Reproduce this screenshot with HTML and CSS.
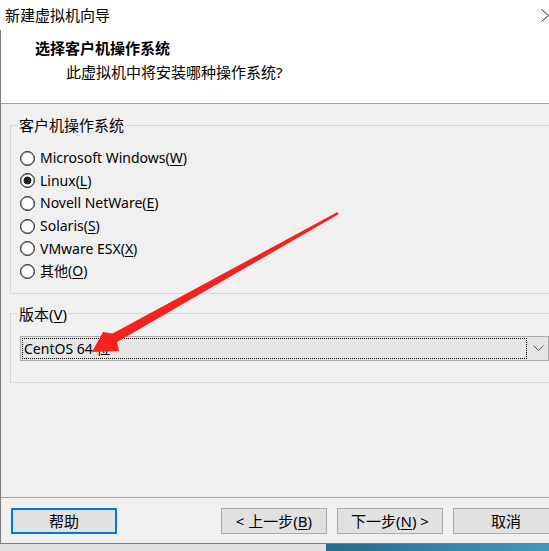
FILE: index.html
```html
<!DOCTYPE html>
<html lang="zh-CN">
<head>
<meta charset="utf-8">
<title>新建虚拟机向导</title>
<link rel="stylesheet" href="styles.css">
</head>
<body>
<div class="screen">
  <div class="window">
    <div class="titlebar">
      <span class="title">新建虚拟机向导</span>
      <svg class="close" width="8" height="14" viewBox="0 0 8 14"><path d="M0.5 0.5 L7.5 6.5 M0.5 12.5 L7.5 6.5" stroke="#222" stroke-width="1" fill="none"/></svg>
    </div>
    <div class="frame">
      <div class="header">
        <div class="h-title">选择客户机操作系统</div>
        <div class="h-sub">此虚拟机中将安装哪种操作系统?</div>
      </div>
      <div class="content">
        <fieldset class="group g-os">
          <legend>客户机操作系统</legend>
          <div class="radio-list">
            <div class="radio"><span class="dot"></span><span class="lbl">Microsoft Windows(<u>W</u>)</span></div>
            <div class="radio"><span class="dot checked"></span><span class="lbl">Linux(<u>L</u>)</span></div>
            <div class="radio"><span class="dot"></span><span class="lbl">Novell NetWare(<u>E</u>)</span></div>
            <div class="radio"><span class="dot"></span><span class="lbl">Solaris(<u>S</u>)</span></div>
            <div class="radio"><span class="dot"></span><span class="lbl">VMware ESX(<u>X</u>)</span></div>
            <div class="radio"><span class="dot"></span><span class="lbl">其他(<u>O</u>)</span></div>
          </div>
        </fieldset>
        <fieldset class="group g-ver">
          <legend>版本(<u>V</u>)</legend>
          <div class="combo">
            <div class="combo-field">CentOS 64 位</div>
            <div class="combo-btn"><svg width="11" height="6" viewBox="0 0 11 6"><path d="M0.5 0.5 L5.5 5.5 L10.5 0.5" stroke="#555" stroke-width="1" fill="none"/></svg></div>
          </div>
        </fieldset>
      </div>
      <div class="footer">
        <div class="btn default">帮助</div>
        <div class="btn-group">
          <div class="btn">&lt; 上一步(<u>B</u>)</div>
          <div class="btn">下一步(<u>N</u>) &gt;</div>
          <div class="btn">取消</div>
        </div>
      </div>
    </div>
  </div>
  <div class="desktop">
    <div class="shade"></div>
    <div class="wall"></div>
  </div>
  <svg class="arrow" width="549" height="551" viewBox="0 0 549 551">
    <polygon points="337.5,212 112.6,333.6 103,332 92,352 119,351 117,342 338.6,214.2" fill="#f5221e"/>
  </svg>
</div>
</body>
</html>
```

FILE: styles.css
```css
* { box-sizing: border-box; }
html, body { margin: 0; padding: 0; }
body {
  font-family: "Noto Sans", "Noto Sans CJK SC", sans-serif;
  font-size: 15px;
  color: #000;
  background: #f0f0f0;
}
.screen {
  position: relative;
  width: 549px;
  height: 551px;
  overflow: hidden;
  display: flex;
  flex-direction: column;
}
.window {
  width: 549px;
  height: 544px;
  display: flex;
  flex-direction: column;
  overflow: hidden;
}
.titlebar {
  height: 30px;
  flex: none;
  background: #fff;
  display: flex;
  align-items: center;
  justify-content: space-between;
  padding-left: 5px;
}
.title { font-size: 15px; line-height: 20px; }
.close { display: block; margin-top: 1px; }
.frame {
  flex: 1;
  display: flex;
  flex-direction: column;
  border-left: 1px solid #7a7a7a;
  border-bottom: 1px solid #7a7a7a;
  background: #f0f0f0;
}
.header {
  height: 74px;
  flex: none;
  background: #fff;
  border-bottom: 1px solid #a0a0a0;
  padding-top: 8px;
}
.h-title {
  font-weight: bold;
  font-size: 15px;
  line-height: 20px;
  padding-left: 34px;
}
.h-sub {
  font-size: 15px;
  line-height: 20px;
  margin-top: 4px;
  padding-left: 65px;
}
.content {
  height: 393px;
  flex: none;
  padding-top: 11px;
}
.group {
  margin: 0 -40px 0 9px;
  border: 1px solid #d7d7d7;
  min-width: 0;
}
.group legend {
  font-size: 15px;
  line-height: 20px;
  padding: 0 1px;
  margin-left: -2px;
}
.g-os { padding: 12px 0 10px 9px; }
.g-ver { margin-top: 10px; padding: 12px 0 21px 9px; }
.radio-list { display: flex; flex-direction: column; }
.radio {
  height: 22.6px;
  display: flex;
  align-items: center;
  gap: 5px;
  font-size: 14px;
}
.lbl { line-height: 20px; }
.dot {
  width: 15px;
  height: 15px;
  flex: none;
  border-radius: 50%;
  border: 1px solid #1e1e1e;
  background: #fff;
  box-shadow: inset 0 0 0 0.4px #666;
}
.dot.checked {
  background: radial-gradient(circle, #222 0 3.6px, #fff 4.3px);
}
u { text-underline-offset: 2px; }
.combo {
  width: 529px;
  height: 25px;
  border: 1px solid #adadad;
  background: #e5e5e5;
  padding: 1px;
  display: flex;
}
.combo-field {
  width: 505px;
  border: 1px dotted #000;
  padding-left: 1px;
  display: flex;
  align-items: center;
  font-size: 14px;
}
.combo-btn {
  flex: 1;
  display: flex;
  align-items: center;
  justify-content: center;
  padding-left: 2px;
}
.combo-btn svg { display: block; }
.footer {
  flex: 1;
  border-top: 1px solid #a0a0a0;
  padding: 10px 0 0 10px;
  display: flex;
  align-items: flex-start;
}
.btn-group {
  display: flex;
  gap: 10px;
  margin-left: 104px;
}
.btn {
  width: 106px;
  height: 26px;
  flex: none;
  border: 1px solid #adadad;
  background: #e1e1e1;
  display: flex;
  align-items: center;
  justify-content: center;
  font-size: 15px;
  line-height: 20px;
}
.btn.default { border: 2px solid #0078d7; }
.desktop {
  flex: 1;
  display: flex;
}
.shade { width: 326px; background: #e2e2e2; }
.wall { flex: 1; background: linear-gradient(90deg, #256b8e, #3f9ac0); }
.arrow {
  position: absolute;
  left: 0;
  top: 0;
  pointer-events: none;
}
```
